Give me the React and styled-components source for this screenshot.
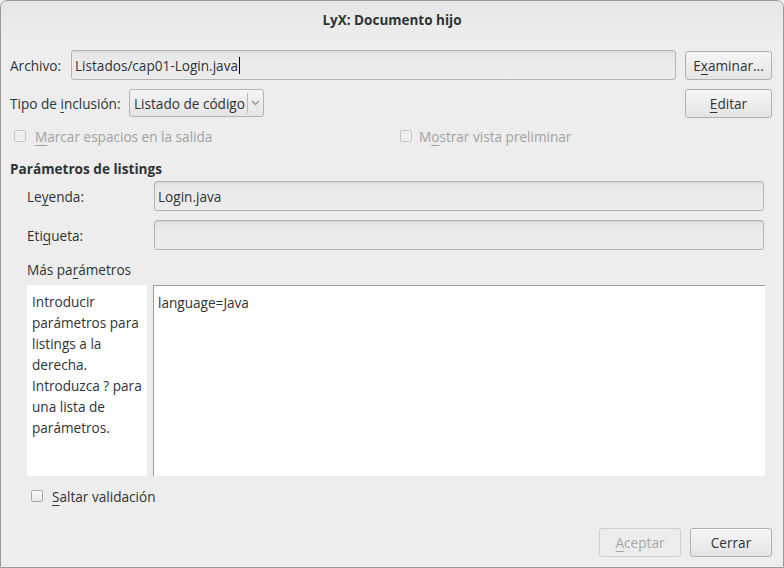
import React from "react";
import styled, { createGlobalStyle } from "styled-components";

const Global = createGlobalStyle`
  html, body { margin: 0; padding: 0; background: #ededed; }
  body { font-family: "Open Sans", "DejaVu Sans", sans-serif; font-size: 13.6px; color: #2e3436; }
`;

const Window = styled.div`
  box-sizing: border-box;
  width: 784px;
  height: 568px;
  border: 1px solid #9a9a9a;
  border-radius: 7px 7px 0 0;
  background: #ededed;
  display: flex;
  flex-direction: column;
  overflow: hidden;
`;

const TitleBar = styled.div`
  height: 38px;
  display: flex;
  align-items: center;
  justify-content: center;
  font-weight: bold;
  font-size: 13.5px;
  color: #2e3436;
  background: linear-gradient(#e6e6e6, #ededed);
`;

const Body = styled.div`
  flex: 1;
  display: flex;
  flex-direction: column;
  padding: 11px 11px 10px 9px;
`;

const Row = styled.div`
  display: flex;
  align-items: center;
  gap: ${(p) => p.gap ?? 9}px;
  margin-top: ${(p) => p.top || 0}px;
  height: ${(p) => p.h || 30}px;
`;

const Label = styled.div`
  width: ${(p) => (p.w ? p.w + "px" : "auto")};
  flex-shrink: 0;
  white-space: nowrap;
  color: ${(p) => (p.disabled ? "#a2a2a2" : "#2e3436")};
`;

const Mn = styled.span`
  text-decoration: underline;
  text-underline-offset: 3px;
`;

const Field = styled.div`
  box-sizing: border-box;
  flex: 1;
  height: 30px;
  border: 1px solid #b4b4b4;
  border-radius: 3px;
  background: linear-gradient(#e3e3e3, #ebebeb 40%, #ececec);
  box-shadow: inset 0 1px 1px rgba(0, 0, 0, 0.06);
  display: flex;
  align-items: center;
  padding-left: 3px;
`;

const Caret = styled.span`
  display: inline-block;
  width: 1px;
  height: 17px;
  background: #000;
  margin-left: 1px;
`;

const Button = styled.div`
  box-sizing: border-box;
  width: ${(p) => p.w || 87}px;
  height: 29px;
  border: 1px solid ${(p) => (p.disabled ? "#cfcfcf" : "#b0b0b0")};
  border-radius: 3px;
  background: ${(p) => (p.disabled ? "#ededed" : "linear-gradient(#f6f6f6, #e4e4e4)")};
  color: ${(p) => (p.disabled ? "#a8a8a8" : "#2e3436")};
  display: flex;
  align-items: center;
  justify-content: center;
  flex-shrink: 0;
`;

const Select = styled.div`
  box-sizing: border-box;
  width: 135px;
  height: 28px;
  border: 1px solid #b4b4b4;
  border-radius: 3px;
  background: linear-gradient(#f4f4f4, #e5e5e5);
  display: flex;
  align-items: center;
  padding-left: 4px;
  white-space: nowrap;
`;

const SelectSep = styled.span`
  width: 1px;
  height: 20px;
  background: #b8b8b8;
  margin-left: 2px;
  margin-right: 3px;
`;

const Spacer = styled.div`
  flex: 1;
`;

const CheckRow = styled.div`
  display: flex;
  align-items: center;
  height: 20px;
  margin-top: ${(p) => p.top || 0}px;
  padding-left: ${(p) => p.left || 0}px;
`;

const CheckItem = styled.label`
  display: flex;
  align-items: center;
  width: ${(p) => (p.w ? p.w + "px" : "auto")};
  color: ${(p) => (p.disabled ? "#a2a2a2" : "#2e3436")};
`;

const Box = styled.span`
  box-sizing: border-box;
  width: 12px;
  height: 12px;
  border: 1px solid ${(p) => (p.disabled ? "#c8c8c8" : "#a8a8a8")};
  border-radius: 2px;
  background: ${(p) => (p.disabled ? "#efefef" : "linear-gradient(#fafafa, #e8e8e8)")};
  margin-right: ${(p) => p.gap || 9}px;
`;

const SectionTitle = styled.div`
  font-weight: bold;
  margin-top: ${(p) => p.top || 0}px;
  height: 20px;
  display: flex;
  align-items: center;
`;

const Indent = styled.div`
  display: flex;
  flex-direction: column;
  padding-left: 17px;
  padding-right: ${(p) => p.right || 0}px;
`;

const Params = styled.div`
  display: flex;
  gap: 6px;
  height: 191px;
  margin-top: 6px;
`;

const Help = styled.div`
  box-sizing: border-box;
  width: 120px;
  background: #fff;
  padding: 6px 3px 0 5px;
  line-height: 21px;
  color: #2e3436;
`;

const TextArea = styled.div`
  box-sizing: border-box;
  flex: 1;
  background: #fff;
  border-top: 1px solid #9c9c9c;
  border-left: 1px solid #9c9c9c;
  padding: 7px 4px;
`;

const Footer = styled.div`
  display: flex;
  justify-content: flex-end;
  gap: 9px;
  margin-top: auto;
`;

export default function App() {
  return (
    <>
      <Global />
      <Window>
        <TitleBar>LyX: Documento hijo</TitleBar>
        <Body>
          <Row>
            <Label w={52}>Archivo:</Label>
            <Field>
              Listados/cap01-Login.java<Caret />
            </Field>
            <Button>
              E<Mn>x</Mn>aminar...
            </Button>
          </Row>
          <Row top={9} h={28} gap={0}>
            <Label w={119}>
              Tipo de <Mn>i</Mn>nclusión:
            </Label>
            <Select>
              Listado de código
              <SelectSep />
              <svg width="9" height="6" viewBox="0 0 9 6">
                <path d="M1 1 L4.5 4.5 L8 1" fill="none" stroke="#8a8a8a" strokeWidth="1.2" />
              </svg>
            </Select>
            <Spacer />
            <Button>
              <Mn>E</Mn>ditar
            </Button>
          </Row>
          <CheckRow top={9} left={4}>
            <CheckItem w={386} disabled>
              <Box disabled gap={9} />
              <span>
                <Mn>M</Mn>arcar espacios en la salida
              </span>
            </CheckItem>
            <CheckItem disabled>
              <Box disabled gap={7} />
              <span>
                M<Mn>o</Mn>strar vista preliminar
              </span>
            </CheckItem>
          </CheckRow>
          <SectionTitle top={12}>Parámetros de listings</SectionTitle>
          <Indent right={8}>
            <Row top={3} gap={0}>
              <Label w={127}>
                Le<Mn>y</Mn>enda:
              </Label>
              <Field>Login.java</Field>
            </Row>
            <Row top={9} gap={0}>
              <Label w={127}>
                Eti<Mn>q</Mn>ueta:
              </Label>
              <Field />
            </Row>
            <CheckRow top={9}>
              Más pa<Mn>r</Mn>ámetros
            </CheckRow>
          </Indent>
          <Indent right={7}>
            <Params>
              <Help>
                Introducir parámetros para listings a la derecha. Introduzca ? para una lista de parámetros.
              </Help>
              <TextArea>language=Java</TextArea>
            </Params>
          </Indent>
          <CheckRow top={10} left={21}>
            <CheckItem>
              <Box gap={9} />
              <span>
                <Mn>S</Mn>altar validación
              </span>
            </CheckItem>
          </CheckRow>
          <Footer>
            <Button w={82} disabled>
              <Mn>A</Mn>ceptar
            </Button>
            <Button w={82}>Cerrar</Button>
          </Footer>
        </Body>
      </Window>
    </>
  );
}
